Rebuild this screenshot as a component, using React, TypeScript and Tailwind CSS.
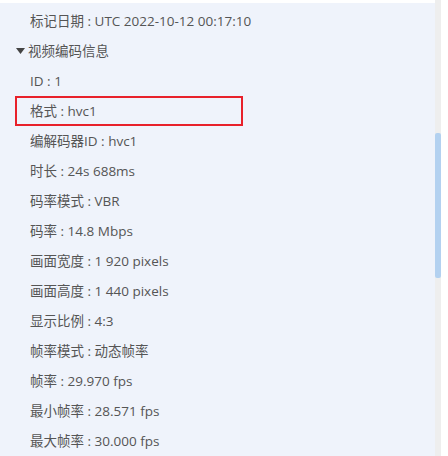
import React from 'react';

const rows = [
  'ID : 1',
  '格式 : hvc1',
  '编解码器ID : hvc1',
  '时长 : 24s 688ms',
  '码率模式 : VBR',
  '码率 : 14.8 Mbps',
  '画面宽度 : 1 920 pixels',
  '画面高度 : 1 440 pixels',
  '显示比例 : 4:3',
  '帧率模式 : 动态帧率',
  '帧率 : 29.970 fps',
  '最小帧率 : 28.571 fps',
  '最大帧率 : 30.000 fps',
];

const App: React.FC = () => {
  return (
    <div
      className="flex w-[448px] h-[456px] overflow-hidden bg-white text-[13.5px] text-[#555]"
      style={{ fontFamily: '"Open Sans", "Noto Sans CJK SC", sans-serif' }}
    >
      {/* Info panel */}
      <div className="w-[435px] mt-[3px] bg-[#eff3fb] pt-[3px]">
        <div className="h-[30px] flex items-center pl-[30px]">标记日期 : UTC 2022-10-12 00:17:10</div>
        <div className="h-[30px] flex items-center pl-[16px]">
          <svg width="9" height="6" viewBox="0 0 9 6" className="mr-[3px]">
            <path d="M0 0 H9 L4.5 6 Z" fill="#444" />
          </svg>
          视频编码信息
        </div>
        {rows.map((r, i) =>
          i === 1 ? (
            <div key={r} className="h-[30px] flex items-center">
              <div className="ml-[15px] w-[228px] h-[30px] border-2 border-[#e8202a] flex items-center pl-[13px]">
                {r}
              </div>
            </div>
          ) : (
            <div key={r} className="h-[30px] flex items-center pl-[30px]">
              {r}
            </div>
          )
        )}
      </div>

      {/* Scrollbar */}
      <div className="w-[6px] bg-[#eeeeee]">
        <div className="mt-[133px] h-[145px] rounded-[2px] bg-[#b3d1f0]" />
      </div>
    </div>
  );
};

export default App;
